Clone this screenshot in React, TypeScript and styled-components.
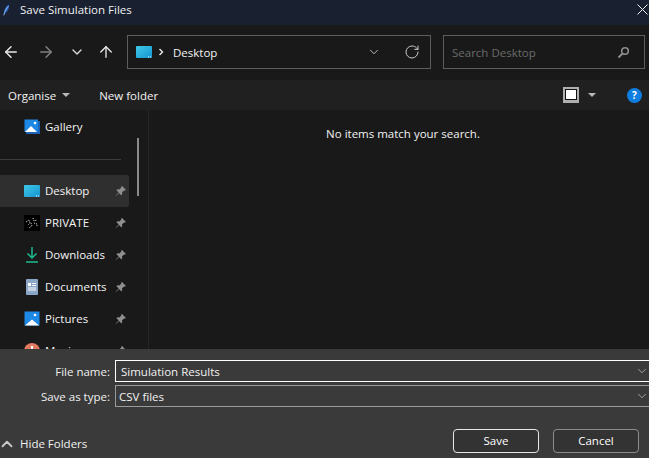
import styled, { createGlobalStyle } from "styled-components";
import { ArrowLeft, ArrowRight, ArrowUp, ChevronDown, ChevronUp, RotateCw } from "lucide-react";

const GlobalStyle = createGlobalStyle`
  html, body {
    margin: 0;
    height: 100%;
    background: #191919;
    overflow: hidden;
  }
  #root {
    height: 100%;
  }
  * {
    box-sizing: border-box;
  }
`;

const Dialog = styled.div`
  width: 649px;
  height: 458px;
  display: flex;
  flex-direction: column;
  font-family: "Open Sans", "Noto Sans", sans-serif;
  font-size: 11.5px;
  color: #fff;
  overflow: hidden;
`;

const TitleBar = styled.div`
  height: 25px;
  flex: none;
  display: flex;
  align-items: center;
  padding: 0 1px 6px 3px;
  background: #192030;
`;

const Title = styled.span`
  margin-left: 10px;
  flex: 1;
  color: #f0f0f0;
`;

const NavBar = styled.div`
  height: 55px;
  flex: none;
  display: flex;
  align-items: center;
  padding: 0 5px 1px 2px;
  background: #191919;
`;

const NavIcons = styled.div`
  width: 125px;
  flex: none;
  display: flex;
  align-items: center;
`;

const NavSlot = styled.span<{ $width: number }>`
  width: ${(p) => p.$width}px;
  display: flex;
  align-items: center;
`;

const FieldBox = styled.div<{ $width: number }>`
  width: ${(p) => p.$width}px;
  height: 34px;
  flex: none;
  display: flex;
  align-items: center;
  border: 1px solid #5c5c5c;
`;

const AddressBox = styled(FieldBox)`
  padding: 0 10px 0 8px;
  margin-right: 12px;
`;

const SearchBox = styled(FieldBox)`
  padding: 0 14px 0 8px;
  color: #6b6b6b;
  justify-content: space-between;
`;

const Crumb = styled.span`
  flex: 1;
  margin-left: 9px;
  color: #f2f2f2;
`;

const Separator = styled.span`
  margin-left: 6px;
  display: flex;
`;

const RefreshSlot = styled.span`
  margin-left: 23px;
  display: flex;
`;

const Toolbar = styled.div`
  height: 30px;
  flex: none;
  display: flex;
  align-items: center;
  padding: 0 8px;
  background: #202020;
  color: #f2f2f2;
`;

const Caret = styled.span<{ $gap?: number }>`
  width: 0;
  height: 0;
  margin-left: ${(p) => p.$gap ?? 6}px;
  border-left: 4px solid transparent;
  border-right: 4px solid transparent;
  border-top: 4px solid #b8b8b8;
`;

const NewFolder = styled.span`
  margin-left: 29px;
  flex: 1;
`;

const ViewButton = styled.span`
  width: 16px;
  height: 16px;
  display: block;
  background: #fff;
  border: 2px solid #b0b0b0;
  border-bottom-width: 3px;
  box-shadow: inset 0 0 0 1px #111;
`;

const HelpBadge = styled.span`
  width: 15px;
  height: 15px;
  margin-left: 31px;
  margin-right: -1px;
  border-radius: 50%;
  background: #0f7ee0;
  color: #fff;
  font-size: 10px;
  font-weight: 700;
  line-height: 15px;
  text-align: center;
`;

const Main = styled.div`
  flex: 1;
  min-height: 0;
  display: flex;
  background: #191919;
`;

const Sidebar = styled.div`
  position: relative;
  width: 149px;
  flex: none;
  padding-top: 1px;
  border-right: 1px solid #262626;
  overflow: hidden;
`;

const Thumb = styled.div`
  position: absolute;
  left: 137px;
  top: 28px;
  width: 2px;
  height: 58px;
  background: #8a8a8a;
`;

const NavRow = styled.div<{ $active?: boolean }>`
  width: 129px;
  height: 32px;
  flex: none;
  display: flex;
  align-items: center;
  padding-left: 24px;
  border-radius: 0 2px 2px 0;
  background: ${(p) => (p.$active ? "#2f2f2f" : "transparent")};
  color: #f4f4f4;
`;

const RowIcon = styled.span`
  width: 16px;
  height: 16px;
  flex: none;
  display: flex;
  align-items: center;
  justify-content: center;
`;

const RowLabel = styled.span`
  margin-left: 5px;
  flex: 1;
  white-space: nowrap;
  position: relative;
  top: -1px;
`;

const PinSlot = styled.span`
  width: 12px;
  height: 12px;
  flex: none;
  margin-right: 2px;
  display: flex;
`;

const Divider = styled.div`
  width: 121px;
  height: 1px;
  margin: 16px 0 15px;
  background: #3c3c3c;
`;

const Content = styled.div`
  flex: 1;
  padding: 15px 0 0 8px;
  text-align: center;
  color: #f2f2f2;
  line-height: 17px;
`;

const Footer = styled.div`
  height: 109px;
  flex: none;
  padding-top: 11px;
  background: #3a3a3a;
  display: flex;
  flex-direction: column;
`;

const FormRow = styled.div`
  height: 22px;
  margin-bottom: 3px;
  display: flex;
  align-items: center;
  padding-left: 8px;
`;

const FormLabel = styled.span`
  width: 102px;
  flex: none;
  text-align: right;
  color: #f0f0f0;
`;

const Combo = styled.div<{ $focused?: boolean }>`
  flex: 1;
  height: 100%;
  margin-left: 5px;
  display: flex;
  align-items: center;
  justify-content: space-between;
  padding: 0 0 0 ${(p) => (p.$focused ? "5px" : "3px")};
  border: 1px solid ${(p) => (p.$focused ? "#ffffff" : "#9a9a9a")};
  border-right: none;
  color: #f2f2f2;
`;

const ActionRow = styled.div`
  margin-top: 19px;
  display: flex;
  align-items: center;
  padding: 0 10px 0 0;
`;

const HideFolders = styled.span`
  flex: 1;
  display: flex;
  align-items: center;
  margin-left: -2px;
  gap: 4px;
  padding-top: 5px;
  color: #f0f0f0;
`;

const Button = styled.button<{ $primary?: boolean }>`
  width: 86px;
  height: 24px;
  margin-left: 14px;
  padding: 0 0 2px;
  border: 1px solid ${(p) => (p.$primary ? "#e8e8e8" : "#8c8c8c")};
  border-radius: 4px;
  background: #333333;
  color: #fff;
  font: inherit;
`;

const Pin = () => (
  <svg width="12" height="12" viewBox="0 0 12 12" fill="#8f8f8f">
    <path d="M7 1l4 4-1 .6-1-.2-2 2 .2 2-1 .8-2.2-2.3L1 11l-.3-.3 3-3.2L1.500 5.300l.8-1 2 .2 2-2-.1-1z" />
  </svg>
);

const CloseIcon = () => (
  <svg width="11" height="11" viewBox="0 0 11 11" fill="none" stroke="#f0f0f0" strokeWidth="1">
    <path d="M.5.500l10 10M10.500.500l-10 10" />
  </svg>
);

const DesktopIcon = () => (
  <svg width="16" height="12" viewBox="0 0 16 12">
    <defs>
      <linearGradient id="desk" x1="0" y1="0" x2="1" y2="1">
        <stop offset="0" stopColor="#3fc9e8" />
        <stop offset="1" stopColor="#1594d0" />
      </linearGradient>
    </defs>
    <rect width="16" height="12" rx="1" fill="url(#desk)" />
    <rect x="12" y="10.500" width="1" height="1" fill="#fff" />
    <rect x="14" y="10.500" width="1" height="1" fill="#fff" />
  </svg>
);

const PictureIcon = ({ stacked }: { stacked?: boolean }) => (
  <svg width="16" height="16" viewBox="0 0 16 16">
    {stacked && <rect x="2" y="2" width="14" height="13" fill="#1c62b8" />}
    <rect x="0.500" y="0.500" width={stacked ? 13.5 : 15} height={stacked ? 12.5 : 14} fill="#1e88e5" />
    <path d={stacked ? "M1 13l6-6 6 6z" : "M1 14.500l7-6 7 6z"} fill="#fff" />
    <circle cx="11" cy="4" r="1.300" fill="#fff" />
  </svg>
);

const PrivateIcon = () => (
  <svg width="16" height="16" viewBox="0 0 16 16">
    <rect width="16" height="16" fill="#000" />
    <path d="M2 7l3-2 1 3-2 2M9 3l1 3 3-1M7 8l1 3-3 2M10 8l3 1 0 3" stroke="#ddd" strokeWidth="1" fill="none" strokeDasharray="1 1" />
  </svg>
);

const DownloadIcon = () => (
  <svg width="12" height="16" viewBox="0 0 12 16" fill="none" stroke="#1fb88d" strokeWidth="1.500">
    <path d="M6 0v11M1.500 6.500L6 11l4.500-4.500M0 15h12" />
  </svg>
);

const DocumentIcon = () => (
  <svg width="12" height="16" viewBox="0 0 12 16">
    <rect width="12" height="16" rx="1" fill="#8ba6c6" />
    <rect x="2" y="4" width="3" height="3" fill="#fff" />
    <path d="M6 4.500h4M6 6.500h4M2 9h8M2 11h8" stroke="#fff" strokeWidth="1" />
  </svg>
);

const FeatherIcon = () => (
  <svg width="7" height="14" viewBox="0 0 9 16">
    <path d="M1 15C1 9 3 3 8 1c0 5-2 9-5 11z" fill="#2c6cc4" />
    <path d="M1 15C2 10 4 6 7 3" stroke="#cfe2ff" strokeWidth="0.700" fill="none" />
  </svg>
);

const SearchGlass = () => (
  <svg width="13" height="13" viewBox="0 0 13 13" fill="none" stroke="#8e8e8e">
    <circle cx="8" cy="5" r="3.300" strokeWidth="1.600" />
    <path d="M5.500 7.500L1.500 11.500" strokeWidth="2" />
  </svg>
);

const places = [
  { label: "Desktop", icon: <DesktopIcon />, active: true },
  { label: "PRIVATE", icon: <PrivateIcon /> },
  { label: "Downloads", icon: <DownloadIcon /> },
  { label: "Documents", icon: <DocumentIcon /> },
  { label: "Pictures", icon: <PictureIcon /> },
];

export default function App() {
  return (
    <Dialog>
      <GlobalStyle />
      <TitleBar>
        <FeatherIcon />
        <Title>Save Simulation Files</Title>
        <CloseIcon />
      </TitleBar>

      <NavBar>
        <NavIcons>
          <NavSlot $width={35}>
            <ArrowLeft size={18} color="#e8e8e8" />
          </NavSlot>
          <NavSlot $width={32}>
            <ArrowRight size={18} color="#808080" />
          </NavSlot>
          <NavSlot $width={28}>
            <ChevronDown size={16} color="#dcdcdc" strokeWidth={2} />
          </NavSlot>
          <NavSlot $width={20}>
            <ArrowUp size={18} color="#e8e8e8" strokeWidth={1.8} />
          </NavSlot>
        </NavIcons>
        <AddressBox $width={304}>
          <DesktopIcon />
          <Separator>
            <svg width="6" height="8" viewBox="0 0 6 8" fill="none" stroke="#e8e8e8" strokeWidth="1.400">
              <path d="M1.500 1l3 3-3 3" />
            </svg>
          </Separator>
          <Crumb>Desktop</Crumb>
          <ChevronDown size={14} color="#d0d0d0" strokeWidth={1.5} />
          <RefreshSlot>
            <RotateCw size={16} color="#c8c8c8" strokeWidth={1.5} />
          </RefreshSlot>
        </AddressBox>
        <SearchBox $width={202}>
          Search Desktop
          <SearchGlass />
        </SearchBox>
      </NavBar>

      <Toolbar>
        Organise
        <Caret />
        <NewFolder>New folder</NewFolder>
        <ViewButton />
        <Caret $gap={9} />
        <HelpBadge>?</HelpBadge>
      </Toolbar>

      <Main>
        <Sidebar>
          <Thumb />
          <NavRow>
            <RowIcon>
              <PictureIcon stacked />
            </RowIcon>
            <RowLabel>Gallery</RowLabel>
          </NavRow>
          <Divider />
          {places.map((place) => (
            <NavRow key={place.label} $active={place.active}>
              <RowIcon>{place.icon}</RowIcon>
              <RowLabel>{place.label}</RowLabel>
              <PinSlot>
                <Pin />
              </PinSlot>
            </NavRow>
          ))}
          <NavRow>
            <RowIcon>
              <svg width="16" height="16" viewBox="0 0 16 16">
                <circle cx="8" cy="8" r="8" fill="#e07a60" />
                <rect x="7" y="3" width="2" height="7" fill="#fff" />
              </svg>
            </RowIcon>
            <RowLabel>Music</RowLabel>
            <PinSlot>
              <Pin />
            </PinSlot>
          </NavRow>
        </Sidebar>
        <Content>No items match your search.</Content>
      </Main>

      <Footer>
        <FormRow>
          <FormLabel>File name:</FormLabel>
          <Combo $focused>
            Simulation Results
            <ChevronDown size={14} color="#b0b0b0" strokeWidth={1.5} />
          </Combo>
        </FormRow>
        <FormRow>
          <FormLabel>Save as type:</FormLabel>
          <Combo>
            CSV files
            <ChevronDown size={14} color="#b0b0b0" strokeWidth={1.5} />
          </Combo>
        </FormRow>
        <ActionRow>
          <HideFolders>
            <ChevronUp size={18} color="#c8c8c8" strokeWidth={2.4} />
            Hide Folders
          </HideFolders>
          <Button $primary>Save</Button>
          <Button>Cancel</Button>
        </ActionRow>
      </Footer>
    </Dialog>
  );
}
